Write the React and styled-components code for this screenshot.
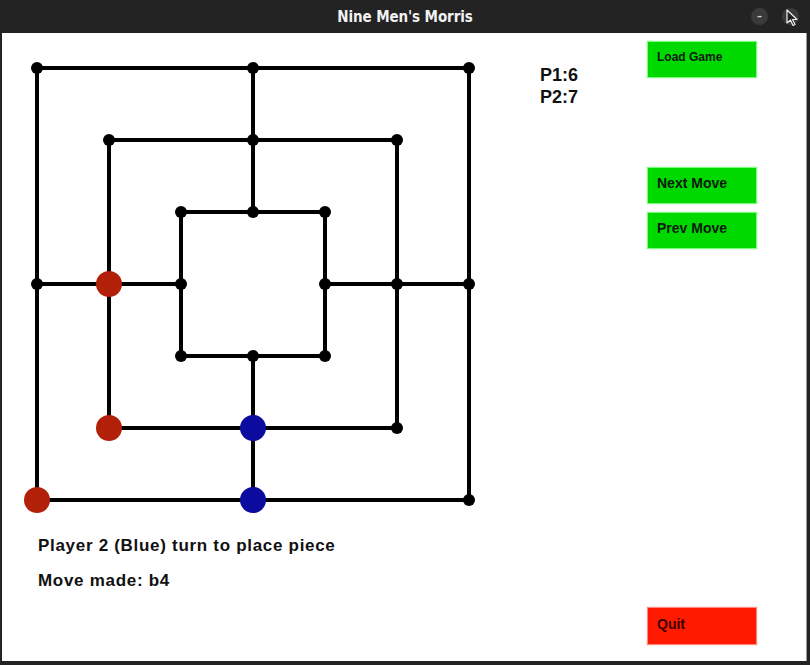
import React from "react";
import styled, { createGlobalStyle } from "styled-components";

const GlobalStyle = createGlobalStyle`
  html, body {
    margin: 0;
    padding: 0;
    background: #232323;
  }
`;

const Frame = styled.div`
  width: 810px;
  height: 665px;
  background: #232323;
  display: flex;
  flex-direction: column;
  overflow: hidden;
`;

const TitleBar = styled.div`
  height: 33px;
  flex: none;
  display: grid;
  grid-template-columns: 1fr auto 1fr;
  align-items: center;
`;

const Title = styled.div`
  grid-column: 2;
  color: #f2f2f2;
  font-family: "DejaVu Sans Condensed", "Liberation Sans Narrow", "Liberation Sans", sans-serif;
  font-weight: bold;
  font-size: 15px;
  letter-spacing: -0.1px;
`;

const Controls = styled.div`
  grid-column: 3;
  justify-self: end;
  display: flex;
  gap: 14px;
  padding-right: 11px;
`;

const ControlButton = styled.div`
  position: relative;
  width: 17px;
  height: 17px;
  border-radius: 50%;
  background: #3a3a3a;
  display: flex;
  align-items: center;
  justify-content: center;
  color: #cfcfcf;
  font-family: "DejaVu Sans", sans-serif;
  font-size: 10px;
  font-weight: bold;
`;

const Cursor = styled.svg`
  position: absolute;
  left: 4px;
  top: 1px;
`;

const Body = styled.div`
  flex: 1;
  margin: 0 3px 4px 2px;
  background: #ffffff;
  border-right: 1px solid #9c9c9c;
  display: flex;
  font-family: "Liberation Sans", Arial, sans-serif;
  color: #111;
`;

const BoardColumn = styled.div`
  width: 500px;
  padding: 20px 0 0 20px;
  display: flex;
  flex-direction: column;
`;

const Status = styled.div`
  margin: ${(p) => p.$top}px 0 0 16px;
  font-size: 17px;
  font-weight: bold;
  line-height: 20px;
  letter-spacing: 0.7px;
`;

const ScoreColumn = styled.div`
  width: 108px;
  padding: 31px 0 0 18px;
  font-size: 18px;
  font-weight: bold;
  line-height: 22px;
`;

const ButtonColumn = styled.div`
  width: 108px;
  padding: 9px 0 17px;
  display: flex;
  flex-direction: column;
`;

const Button = styled.div`
  height: ${(p) => p.$h}px;
  margin-top: ${(p) => p.$mt};
  padding: 0 0 ${(p) => p.$pb}px 9px;
  box-sizing: border-box;
  display: flex;
  align-items: center;
  background: ${(p) => (p.$red ? "#ff1a00" : "#00d900")};
  box-shadow: 0 0 1px 1px ${(p) => (p.$red ? "#ff8a80" : "#7dff7d")};
  color: ${(p) => (p.$red ? "#3a0000" : "#0b1a0b")};
  font-size: ${(p) => p.$fs}px;
  font-weight: bold;
`;

const STEP = 72;
const O = 15;
const pos = (i) => O + i * STEP;

const points = [];
[0, 1, 2].forEach((k) => {
  const a = k;
  const b = 3;
  const c = 6 - k;
  [
    [a, a], [b, a], [c, a],
    [a, b], [c, b],
    [a, c], [b, c], [c, c],
  ].forEach(([x, y]) => points.push([x, y]));
});

const pieces = [
  { x: 1, y: 3, color: "#b3200a" },
  { x: 1, y: 5, color: "#b3200a" },
  { x: 0, y: 6, color: "#b3200a" },
  { x: 3, y: 5, color: "#0b0ba0" },
  { x: 3, y: 6, color: "#0b0ba0" },
];

function Board() {
  return (
    <svg width="462" height="462" viewBox="0 0 462 462">
      <g stroke="#000" strokeWidth="4" fill="none">
        {[0, 1, 2].map((k) => (
          <rect
            key={k}
            x={pos(k)}
            y={pos(k)}
            width={(6 - 2 * k) * STEP}
            height={(6 - 2 * k) * STEP}
          />
        ))}
        <line x1={pos(3)} y1={pos(0)} x2={pos(3)} y2={pos(2)} />
        <line x1={pos(3)} y1={pos(4)} x2={pos(3)} y2={pos(6)} />
        <line x1={pos(0)} y1={pos(3)} x2={pos(2)} y2={pos(3)} />
        <line x1={pos(4)} y1={pos(3)} x2={pos(6)} y2={pos(3)} />
      </g>
      {points.map(([x, y]) => (
        <circle key={`${x}-${y}`} cx={pos(x)} cy={pos(y)} r="6" fill="#000" />
      ))}
      {pieces.map((p) => (
        <circle key={`p${p.x}-${p.y}`} cx={pos(p.x)} cy={pos(p.y)} r="13" fill={p.color} />
      ))}
    </svg>
  );
}

export default function App() {
  return (
    <>
      <GlobalStyle />
      <Frame>
        <TitleBar>
          <Title>Nine Men's Morris</Title>
          <Controls>
            <ControlButton>–</ControlButton>
            <ControlButton>
              <Cursor width="14" height="18" viewBox="0 0 14 18">
                <path d="M1 1 L1 14 L4.5 11 L7 16.5 L9 15.5 L6.5 10.5 L11 10.5 Z" fill="#222" stroke="#eee" strokeWidth="1.2" strokeLinejoin="round" />
              </Cursor>
            </ControlButton>
          </Controls>
        </TitleBar>
        <Body>
          <BoardColumn>
            <Board />
            <Status $top={21}>Player 2 (Blue) turn to place piece</Status>
            <Status $top={15}>Move made: b4</Status>
          </BoardColumn>
          <ScoreColumn>
            <div>P1:6</div>
            <div>P2:7</div>
          </ScoreColumn>
          <ButtonColumn>
            <Button $h={35} $mt="0" $pb={5} $fs={12}>Load Game</Button>
            <Button $h={35} $mt="91px" $pb={5} $fs={14}>Next Move</Button>
            <Button $h={35} $mt="10px" $pb={5} $fs={14}>Prev Move</Button>
            <Button $h={36} $mt="auto" $pb={4} $fs={14} $red>Quit</Button>
          </ButtonColumn>
        </Body>
      </Frame>
    </>
  );
}
